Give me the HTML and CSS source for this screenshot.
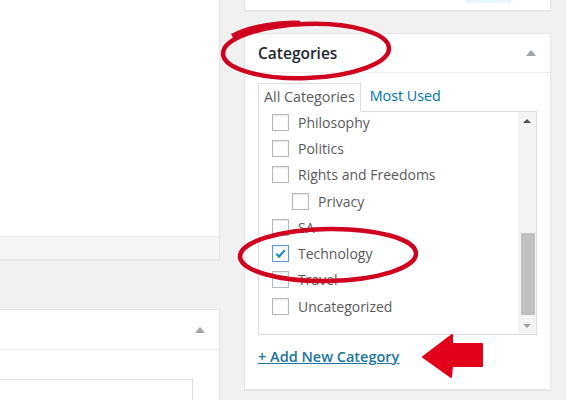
FILE: index.html
```html
<!DOCTYPE html>
<html lang="en">

<head>
    <meta charset="UTF-8">
    <meta name="viewport" content="width=device-width, initial-scale=1.0">
    <title>Edit Post</title>
    <link rel="stylesheet" href="styles.css">
</head>

<body>
    <div class="page">
        <div class="main-col">
            <div class="panel panel-editor">
                <div class="panel-body"></div>
                <div class="panel-foot"></div>
            </div>

            <div class="panel panel-excerpt">
                <div class="panel-head">
                    <span class="toggle"></span>
                </div>
                <div class="panel-inside">
                    <div class="textarea"></div>
                </div>
            </div>
        </div>

        <div class="side-col">
            <div class="box box-publish"></div>

            <div class="box categories">
                <div class="box-head">
                    <h2>Categories</h2>
                    <span class="toggle"></span>
                </div>
                <div class="box-inside">
                    <ul class="tabs">
                        <li class="tab active">All Categories</li>
                        <li class="tab"><a href="#">Most Used</a></li>
                    </ul>
                    <div class="checklist">
                        <ul class="items">
                            <li><span class="check"></span>Philosophy</li>
                            <li><span class="check"></span>Politics</li>
                            <li><span class="check"></span>Rights and Freedoms</li>
                            <li class="child"><span class="check"></span>Privacy</li>
                            <li><span class="check"></span>SA</li>
                            <li><span class="check checked"><svg viewBox="0 0 16 16"><path d="M3.5 8.2 L6.6 11.2 L12.6 4.4" /></svg></span>Technology</li>
                            <li><span class="check"></span>Travel</li>
                            <li><span class="check"></span>Uncategorized</li>
                        </ul>
                        <div class="scrollbar">
                            <div class="arrow up"></div>
                            <div class="track">
                                <div class="thumb"></div>
                            </div>
                            <div class="arrow down"></div>
                        </div>
                    </div>
                    <a href="#" class="add-new">+ Add New Category</a>
                </div>
            </div>
        </div>
    </div>

    <svg class="marks" viewBox="0 0 566 400">
        <ellipse cx="306" cy="51" rx="83" ry="27" transform="rotate(-2 306 51)" />
        <path d="M232 36 C250 26 280 22 300 23" />
        <ellipse cx="328" cy="255" rx="88" ry="26" transform="rotate(-1 328 255)" />
        <polygon class="arrow-mark" points="423,357 452,335 452,344 482,344 482,366 452,366 451,377" />
    </svg>
</body>

</html>
```

FILE: styles.css
```css
body {
    font-family: "Open Sans", "Liberation Sans", sans-serif;
    margin: 0;
    padding: 0;
    background-color: #f1f1f1;
    width: 566px;
    height: 400px;
    overflow: hidden;
    position: relative;
}

.page {
    display: grid;
    grid-template-columns: 220px 307px;
    column-gap: 24px;
    align-items: start;
}

/* left column */

.panel {
    background-color: #ffffff;
    border: 1px solid #e5e5e5;
    border-left: none;
    box-shadow: 0 1px 1px rgba(0, 0, 0, 0.04);
}

.panel-editor {
    border-top: none;
}

.panel-body {
    height: 236px;
}

.panel-foot {
    height: 22px;
    border-top: 1px solid #eeeeee;
    background-color: #f5f5f5;
}

.panel-excerpt {
    margin-top: 49px;
    height: 90px;
    border-bottom: none;
    overflow: hidden;
}

.panel-head {
    height: 39px;
    border-bottom: 1px solid #eeeeee;
    display: flex;
    align-items: center;
    justify-content: flex-end;
    padding-right: 14px;
}

.toggle {
    width: 0;
    height: 0;
    border-left: 5px solid transparent;
    border-right: 5px solid transparent;
    border-bottom: 6px solid #a0a5aa;
}

.panel-inside {
    padding: 29px 26px 0 0;
}

.textarea {
    height: 40px;
    border: 1px solid #dddddd;
    border-left: none;
}

/* right column */

.box {
    background-color: #ffffff;
    border: 1px solid #e5e5e5;
    box-shadow: 0 1px 1px rgba(0, 0, 0, 0.04);
}

.box-publish {
    height: 10px;
    border-top: none;
    background: linear-gradient(to right, transparent 221px, #e8f6fb 221px, #e8f6fb 266px, transparent 266px) no-repeat 0 0 / 100% 3px, #ffffff;
}

.categories {
    margin-top: 22px;
}

.box-head {
    height: 38px;
    border-bottom: 1px solid #eeeeee;
    display: flex;
    align-items: center;
    justify-content: space-between;
    padding: 0 14px 0 13px;
}

.box-head h2 {
    margin: 0;
    font-size: 15.5px;
    font-weight: 600;
    color: #23282d;
}

.box-inside {
    padding: 10px 13px 22px 13px;
}

.tabs {
    list-style: none;
    margin: 0 0 -1px 0;
    padding: 0;
    display: flex;
    position: relative;
}

.tab {
    font-size: 14.3px;
    line-height: 19px;
    padding: 3px 5px 5px 5px;
    color: #5a5a5a;
}

.tab.active {
    border: 1px solid #dddddd;
    border-bottom-color: #ffffff;
    background-color: #ffffff;
}

.tab a {
    color: #0073aa;
    text-decoration: none;
    margin-left: 4px;
}

.checklist {
    height: 222px;
    border: 1px solid #dddddd;
    display: flex;
    overflow: hidden;
}

.items {
    list-style: none;
    margin: -3px 0 0 0;
    padding: 0 0 0 13px;
    flex: 1;
}

.items li {
    height: 26.3px;
    display: flex;
    align-items: center;
    font-size: 14px;
    color: #5a5a5a;
}

.items li.child {
    padding-left: 20px;
}

.check {
    width: 17px;
    height: 17px;
    box-sizing: border-box;
    border: 1px solid #b4b9be;
    box-shadow: inset 0 1px 2px rgba(0, 0, 0, 0.1);
    background-color: #ffffff;
    margin-right: 9px;
    flex-shrink: 0;
}

.check.checked {
    border-color: #5b9dd9;
}

.check svg {
    display: block;
    width: 15px;
    height: 15px;
}

.check svg path {
    fill: none;
    stroke: #1e8cbe;
    stroke-width: 2.4;
}

.scrollbar {
    width: 18px;
    background-color: #f4f4f4;
    display: flex;
    flex-direction: column;
}

.arrow {
    height: 17px;
    display: flex;
    align-items: center;
    justify-content: center;
}

.arrow.up::before {
    content: "";
    border-left: 4px solid transparent;
    border-right: 4px solid transparent;
    border-bottom: 4px solid #505050;
}

.arrow.down::before {
    content: "";
    border-left: 4px solid transparent;
    border-right: 4px solid transparent;
    border-top: 4px solid #a3a3a3;
}

.track {
    flex: 1;
    display: flex;
    flex-direction: column;
    justify-content: flex-end;
    padding: 0 1px 2px 3px;
}

.thumb {
    height: 82px;
    background-color: #c1c1c1;
}

.add-new {
    display: inline-block;
    margin-top: 12px;
    font-size: 14.5px;
    font-weight: 600;
    line-height: 19px;
    color: #21759b;
    text-decoration: underline;
}

/* red annotations drawn over the screenshot */

.marks {
    position: absolute;
    top: 0;
    left: 0;
    width: 566px;
    height: 400px;
    pointer-events: none;
}

.marks ellipse,
.marks path {
    fill: none;
    stroke: #d0001f;
    stroke-width: 4.5;
}

.marks .arrow-mark {
    fill: #e2001a;
    stroke: #e2001a;
    stroke-width: 2;
    stroke-linejoin: round;
}
```
